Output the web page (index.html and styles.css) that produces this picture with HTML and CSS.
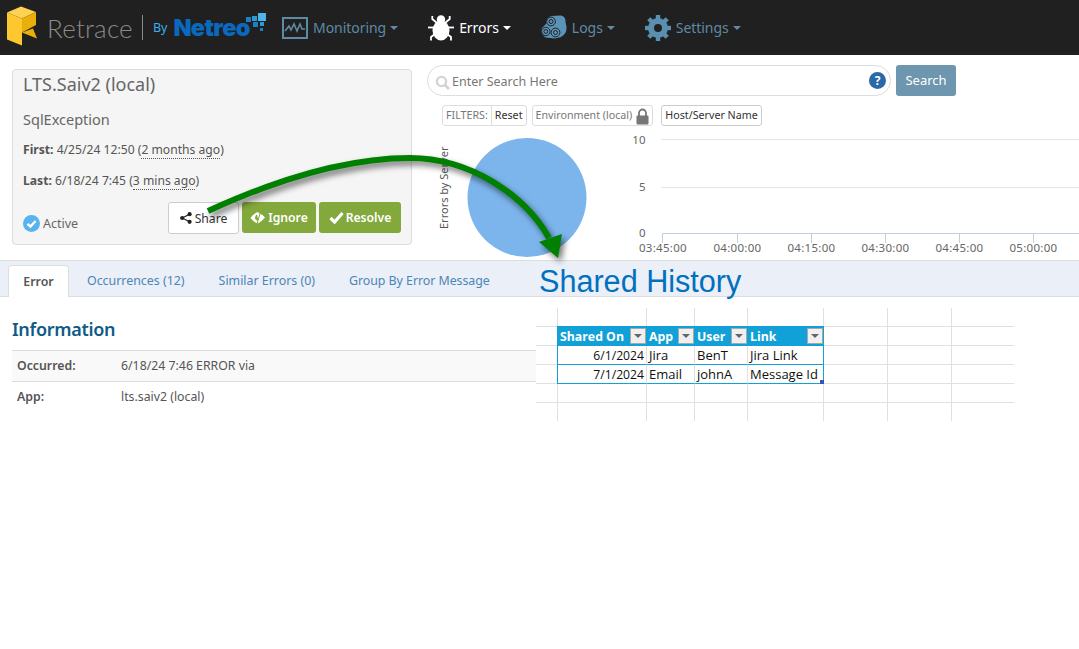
FILE: index.html
```html
<!DOCTYPE html>
<html lang="en">
<head>
<meta charset="utf-8">
<title>Retrace</title>
<link rel="stylesheet" href="styles.css">
</head>
<body>
<header class="topbar">
  <a class="brand">
    <svg class="brand-mark" width="38" height="46" viewBox="0 0 38 46">
      <path d="M7 7.5 L22 13.5 L22 40.5 L7 34.5Z" fill="#fcc72f"/>
      <path d="M7 7.5 L21 1.5 L36 7 L22 13.5Z" fill="#fdd252"/>
      <path d="M22 13.5 L36 7 L36 20 L22 27.5Z" fill="#e8b008"/>
      <path d="M22 27.5 L33 23.5 L37 33.5Z" fill="#e8b008"/>
    </svg>
    <span class="brand-name">Retrace</span>
    <span class="brand-rule"></span>
    <span class="brand-by">By</span>
    <span class="brand-netreo">Netreo</span>
    <svg class="brand-dots" width="24" height="20" viewBox="0 0 24 20">
      <rect x="0" y="4" width="5" height="5" fill="#1d7fc4"/>
      <rect x="6" y="3" width="5" height="5" fill="#2a9ad8"/>
      <rect x="12" y="0" width="8" height="8" fill="#4ab6ea"/>
      <rect x="7" y="9" width="5" height="5" fill="#1d7fc4"/>
      <rect x="14" y="9" width="4" height="4" fill="#2a9ad8"/>
      <rect x="14" y="15" width="3" height="3" fill="#1d7fc4"/>
    </svg>
  </a>
  <nav class="nav">
    <a class="nav-item nav-monitoring">
      <svg width="26" height="22" viewBox="0 0 26 22"><rect x="1" y="1" width="24" height="20" fill="none" stroke="#5f8aa5" stroke-width="2"/><path d="M3 14 L7 9 L9 13 L12 7 L15 14 L18 7 L20 12 L23 12" fill="none" stroke="#5f8aa5" stroke-width="1.6"/></svg>
      <span>Monitoring</span><i class="caret"></i>
    </a>
    <a class="nav-item nav-errors is-active">
      <svg width="26" height="26" viewBox="0 0 26 26"><g stroke="#fff" stroke-width="1.8" fill="none"><path d="M9 8 L4.3 4 L4.3 1"/><path d="M17 8 L21.7 4 L21.7 1"/><path d="M6 12.5 L0 12.5"/><path d="M20 12.5 L26 12.5"/><path d="M7 19 L3 22 L3 25.5"/><path d="M19 19 L23 22 L23 25.5"/></g><ellipse cx="13" cy="15.5" rx="8.5" ry="10" fill="#fff"/><circle cx="13" cy="4.5" r="4.2" fill="#fff"/></svg>
      <span>Errors</span><i class="caret"></i>
    </a>
    <a class="nav-item nav-logs">
      <svg width="26" height="26" viewBox="0 0 26 26">
        <path d="M10 1 L20 0.5 Q25 2 24.5 7 L25.5 12 Q26 19 20 22 L14 23.5 L4.5 22.5 Q-1 18 1 13 L5 9 Q5 3 10 1Z" fill="#5b93b8"/>
        <g fill="#5b93b8" stroke="#202020" stroke-width="1"><circle cx="10" cy="6.5" r="4.4"/><circle cx="4.8" cy="16.5" r="4.2"/><circle cx="14.5" cy="17.5" r="4.4"/></g>
        <g fill="none" stroke="#202020" stroke-width="1"><circle cx="10" cy="6.5" r="2"/><circle cx="4.8" cy="16.5" r="1.9"/><circle cx="14.5" cy="17.5" r="2"/></g>
      </svg>
      <span>Logs</span><i class="caret"></i>
    </a>
    <a class="nav-item nav-settings">
      <svg width="26" height="26" viewBox="0 0 26 26"><circle cx="13" cy="13" r="7" fill="none" stroke="#5b8fb0" stroke-width="6"/><g stroke="#5b8fb0" stroke-width="4.4"><path d="M13 0V5"/><path d="M13 21V26"/><path d="M0 13H5"/><path d="M21 13H26"/><path d="M3.8 3.8L7.3 7.3"/><path d="M18.7 18.7L22.2 22.2"/><path d="M3.8 22.2L7.3 18.7"/><path d="M18.7 7.3L22.2 3.8"/></g></svg>
      <span>Settings</span><i class="caret"></i>
    </a>
  </nav>
</header>

<section class="summary">
  <div class="card">
    <h1 class="card-title">LTS.Saiv2 (local)</h1>
    <h2 class="card-sub">SqlException</h2>
    <p class="card-line"><b>First:</b> 4/25/24 12:50 (<span class="dotted">2 months ago</span>)</p>
    <p class="card-line"><b>Last:</b> 6/18/24 7:45 (<span class="dotted">3 mins ago</span>)</p>
    <div class="card-foot">
      <span class="status">
        <svg width="17" height="17" viewBox="0 0 17 17"><circle cx="8.5" cy="8.5" r="8.5" fill="#58b3ef"/><path d="M4.5 8.8 L7.4 11.6 L12.6 6" fill="none" stroke="#fff" stroke-width="2.4"/></svg>
        Active
      </span>
      <span class="actions">
        <a class="btn btn-share">
          <svg width="12" height="12" viewBox="0 0 12 12"><g fill="#222"><circle cx="2.2" cy="6" r="2.1"/><circle cx="9.6" cy="2.2" r="2.1"/><circle cx="9.6" cy="9.8" r="2.1"/></g><path d="M2.2 6 L9.6 2.2 M2.2 6 L9.6 9.8" stroke="#222" stroke-width="1.2"/></svg>
          Share
        </a>
        <a class="btn btn-green btn-ignore">
          <svg width="16" height="14" viewBox="0 0 16 14"><path d="M0.5 7 Q3 3 7.5 1 L9 2 Q13 3.5 15 6.5 Q12 10 8 12.5 Q3.5 11 0.5 7Z" fill="#fff"/><path d="M7 3.5 Q4.5 5 5.2 8 Q6.5 9.5 8 9.5 L9 7.5 Q7 7 7.5 5.5Z" fill="#83a83c"/><path d="M10.5 1 L7 13" stroke="#83a83c" stroke-width="1"/></svg>
          Ignore
        </a>
        <a class="btn btn-green btn-resolve">
          <svg width="15" height="13" viewBox="0 0 15 13"><path d="M1.5 7 L5.6 11 L13.5 2" fill="none" stroke="#fff" stroke-width="3.2"/></svg>
          Resolve
        </a>
      </span>
    </div>
  </div>

  <div class="side">
    <div class="search-row">
      <div class="search">
        <svg class="search-glass" width="15" height="15" viewBox="0 0 15 15"><circle cx="6.5" cy="6.5" r="4.6" fill="none" stroke="#d4d4d4" stroke-width="2.4"/><path d="M10 10 L14 14" stroke="#d4d4d4" stroke-width="3"/></svg>
        <span class="search-text">Enter Search Here</span>
        <span class="search-help">?</span>
      </div>
      <a class="search-btn">Search</a>
    </div>
    <div class="filters">
      <span class="filter-group"><span class="filter-label">FILTERS:</span><span class="filter-reset">Reset</span></span>
      <span class="filter-chip filter-env">Environment (local)
        <svg width="13" height="17" viewBox="0 0 13 17"><path d="M3 8V5a3.5 3.5 0 0 1 7 0v3" fill="none" stroke="#777" stroke-width="1.8"/><rect x="0.5" y="7.5" width="12" height="9" rx="1" fill="#777"/></svg>
      </span>
      <span class="filter-chip filter-host">Host/Server Name</span>
    </div>
    <svg class="charts" width="652" height="130" viewBox="0 0 652 130">
      <circle cx="100" cy="67.5" r="59.5" fill="#7cb5ec"/>
      <text class="chart-side" transform="translate(21 99) rotate(-90)">Errors by Server</text>
      <g class="chart-grid">
        <path d="M234 9.5H652"/><path d="M234 57.5H652"/>
      </g>
      <g class="chart-axis">
        <path d="M235 103.5H652"/>
        <path d="M235.5 103V113"/><path d="M310.5 103V113"/><path d="M384.5 103V113"/><path d="M458.5 103V113"/><path d="M532.5 103V113"/><path d="M606.5 103V113"/>
      </g>
      <g class="chart-label">
        <text x="219" y="14" text-anchor="end">10</text>
        <text x="219" y="61" text-anchor="end">5</text>
        <text x="219" y="107" text-anchor="end">0</text>
        <text x="236" y="122" text-anchor="middle">03:45:00</text>
        <text x="310.5" y="122" text-anchor="middle">04:00:00</text>
        <text x="384.5" y="122" text-anchor="middle">04:15:00</text>
        <text x="458.5" y="122" text-anchor="middle">04:30:00</text>
        <text x="532.5" y="122" text-anchor="middle">04:45:00</text>
        <text x="606.5" y="122" text-anchor="middle">05:00:00</text>
      </g>
    </svg>
  </div>
</section>

<div class="tabs">
  <a class="tab is-current">Error</a>
  <a class="tab tab-occ">Occurrences (12)</a>
  <a class="tab tab-sim">Similar Errors (0)</a>
  <a class="tab tab-group">Group By Error Message</a>
</div>

<main class="info">
  <h3 class="info-title">Information</h3>
  <div class="info-row is-striped"><b>Occurred:</b><span>6/18/24 7:46 ERROR via</span></div>
  <div class="info-row"><b>App:</b><span>lts.saiv2 (local)</span></div>
</main>

<div class="shared-title">Shared History</div>

<div class="sheet">
  <div class="c"></div><div class="c"></div><div class="c"></div><div class="c"></div><div class="c"></div><div class="c"></div><div class="c"></div><div class="c last"></div>
  <div class="c"></div>
  <div class="c th first">Shared On<i class="fbtn"></i></div><div class="c th">App<i class="fbtn"></i></div><div class="c th">User<i class="fbtn"></i></div><div class="c th">Link<i class="fbtn"></i></div>
  <div class="c"></div><div class="c"></div><div class="c last"></div>
  <div class="c"></div>
  <div class="c td num first">6/1/2024</div><div class="c td">Jira</div><div class="c td">BenT</div><div class="c td end">Jira Link</div>
  <div class="c"></div><div class="c"></div><div class="c last"></div>
  <div class="c"></div>
  <div class="c td num first">7/1/2024</div><div class="c td">Email</div><div class="c td">johnA</div><div class="c td end corner">Message Id</div>
  <div class="c"></div><div class="c"></div><div class="c last"></div>
  <div class="c"></div><div class="c"></div><div class="c"></div><div class="c"></div><div class="c"></div><div class="c"></div><div class="c"></div><div class="c last"></div>
  <div class="c nob"></div><div class="c nob"></div><div class="c nob"></div><div class="c nob"></div><div class="c nob"></div><div class="c nob"></div><div class="c nob"></div><div class="c nob last"></div>
</div>

<svg class="arrow" width="1079" height="649" viewBox="0 0 1079 649">
  <path d="M208 211 C 280 178, 350 158, 410 158 C 470 158, 525 195, 549 238" fill="none" stroke="#008000" stroke-width="6"/>
  <path d="M539 242 L562 234 L558 258Z" fill="#008000"/>
</svg>
</body>
</html>
```
FILE: styles.css
```css
* { box-sizing: border-box; }
html, body { margin: 0; height: 649px; overflow: hidden; background: #fff; }
body { font-family: "Noto Sans", "Open Sans", sans-serif; font-size: 13px; color: #555; position: relative; }
a { text-decoration: none; }

.topbar { height: 55px; background: #202020; display: flex; align-items: center; }
.brand { display: flex; align-items: center; width: 282px; height: 55px; flex: none; }
.brand-mark { flex: none; }
.brand-name { font-family: "Lato", sans-serif; font-weight: 300; font-size: 26px; color: #8a8a8a; margin-left: 9px; letter-spacing: 0.2px; }
.brand-rule { width: 1px; height: 25px; background: #8a8a8a; margin-left: 9px; }
.brand-by { font-size: 12.5px; color: #3eaee8; margin-left: 10px; }
.brand-netreo { font-family: "Inter", sans-serif; font-weight: 900; font-size: 23.5px; color: #0a68bd; margin-left: 6px; letter-spacing: -0.6px; }
.brand-dots { margin: -10px 0 0 -4px; flex: none; }

.nav { display: flex; align-items: center; height: 55px; }
.nav-item { display: flex; align-items: center; font-size: 14px; color: #5f8aa5; letter-spacing: -0.05px; }
.nav-item svg { flex: none; margin-right: 5px; }
.nav-errors { margin-left: 30px; color: #fff; }
.nav-logs { margin-left: 30px; }
.nav-settings { margin-left: 30px; }
.caret { width: 0; height: 0; border-left: 4px solid transparent; border-right: 4px solid transparent; border-top: 4px solid currentColor; margin-left: 4px; }

.summary { display: flex; align-items: flex-start; height: 205px; }
.card { width: 400px; height: 176px; margin: 14px 0 0 12px; padding: 0 10px; background: #f5f5f5; border: 1px solid #ddd; border-radius: 4px; flex: none; }
.card-title { margin: 3px 0 0; font-size: 18px; font-weight: 400; color: #666; line-height: 22px; }
.card-sub { margin: 14px 0 0; font-size: 14.5px; font-weight: 400; color: #666; line-height: 20px; }
.card-line { margin: 11px 0 0; font-size: 12.15px; line-height: 20px; color: #555; }
.card-line + .card-line { margin-top: 11px; }
.dotted { border-bottom: 1px dotted #555; }
.card-foot { display: flex; justify-content: space-between; align-items: center; margin-top: 11px; height: 32px; }
.status { display: flex; align-items: center; gap: 3px; font-size: 12.5px; color: #666; margin-top: 11px; }
.actions { display: flex; gap: 3px; }
.btn { display: flex; align-items: center; justify-content: center; height: 31px; border-radius: 3px; font-size: 12.2px; }
.btn-share { width: 71px; height: 32px; background: #fff; border: 1px solid #ccc; color: #333; gap: 3px; }
.btn-green { background: #83a83c; color: #fff; font-weight: 600; gap: 2px; }
.btn-ignore { width: 74px; }
.btn-resolve { width: 82px; }

.side { margin-left: 15px; flex: 1; min-width: 0; padding-top: 10px; }
.search-row { display: flex; gap: 5px; }
.search { width: 464px; height: 31px; border: 1px solid #ddd; border-radius: 16px; display: flex; align-items: center; padding: 0 4px 0 7px; background: #fff; }
.search-glass { flex: none; margin-top: 3px; }
.search-text { font-size: 12.5px; color: #777; margin: 1px 0 0 2px; flex: 1; }
.search-help { width: 17px; height: 17px; border-radius: 50%; background: #2a68a8; color: #fff; font-weight: 700; font-size: 12px; line-height: 17px; text-align: center; }
.search-btn { width: 60px; height: 31px; border-radius: 3px; background: #6e96ae; color: #fff; font-size: 13px; line-height: 31px; text-align: center; }
.filters { display: flex; gap: 5px; margin: 9px 0 0 15px; height: 21px; font-size: 10.7px; }
.filter-group { display: flex; border: 1px solid #ddd; border-radius: 3px; }
.filter-label { padding: 0 3px 0 3px; color: #777; line-height: 18px; }
.filter-reset { border-left: 1px solid #ddd; padding: 0 3px; color: #333; line-height: 18px; }
.filter-chip { display: flex; align-items: center; border: 1px solid #ddd; border-radius: 3px; padding: 0 3px 1px; white-space: nowrap; }
.filter-env { color: #777; gap: 4px; }
.filter-env svg { margin-top: 3px; }
.filter-host { color: #333; border-color: #ccc; margin-left: 3px; }
.charts { display: block; margin-top: 4px; }
.chart-side { font-size: 11px; fill: #555; }
.chart-grid path { stroke: #e6e6e6; fill: none; }
.chart-axis path { stroke: #c0d0e0; fill: none; }
.chart-label text { font-size: 11.5px; fill: #666; letter-spacing: .3px; }

.tabs { height: 37px; background: #ebeff7; border-top: 1px solid #ddd; border-bottom: 1px solid #ddd; display: flex; align-items: flex-end; padding-left: 8px; font-size: 12.4px; }
.tab { height: 32px; line-height: 32px; color: #4a86b8; margin-bottom: -1px; }
.tab.is-current { width: 61px; text-align: center; background: #fff; border: 1px solid #ddd; border-bottom: 0; border-radius: 4px 4px 0 0; color: #555; font-weight: 600; }
.tab-occ { margin-left: 18px; }
.tab-sim { margin-left: 34px; }
.tab-group { margin-left: 34px; letter-spacing: -0.05px; }

.info { width: 524px; margin-left: 12px; padding-top: 20px; }
.info-title { margin: 0 0 8px; font-size: 18px; line-height: 25px; font-weight: 600; color: #0f5b85; letter-spacing: -0.3px; }
.info-row { display: flex; height: 31px; align-items: center; border-top: 1px solid #ddd; font-size: 12.3px; padding: 0 0 2px 5px; color: #555; }
.info-row b { width: 104px; font-weight: 600; }
.is-striped { background: #f9f9f9; }

.shared-title { position: absolute; left: 539px; top: 263px; font-family: "Liberation Sans", Arial, sans-serif; font-size: 30.6px; line-height: 36px; color: #0070c0; }

.sheet { position: absolute; left: 536px; top: 308px; display: grid; grid-template-columns: 22px 89px 48px 53px 76px 64px 64px 62px; grid-template-rows: 19px repeat(4, 19px) 18px; background: #fff; font-family: "Open Sans", sans-serif; font-size: 13px; color: #111; }
.c { border-right: 1px solid #e0e0e0; border-bottom: 1px solid #e0e0e0; padding: 0 2px; line-height: 19px; white-space: nowrap; position: relative; }
.c.last { border-right: 0; }
.c.nob { border-bottom: 0; }
.th { background: #12a0d8; color: #fff; font-weight: 700; font-size: 12.3px; line-height: 19px; border-right-color: #12a0d8; border-bottom-color: #12a0d8; box-shadow: 0 -1px 0 #12a0d8; }
.th.first { box-shadow: 0 -1px 0 #12a0d8, -1px 0 0 #12a0d8, -1px -1px 0 #12a0d8; }
.fbtn { position: absolute; right: 0; top: 1px; width: 16px; height: 16px; background: #f0f0f3; border: 1px solid #a8a8a8; }
.fbtn::after { content: ""; position: absolute; left: 3px; top: 5px; border-left: 4px solid transparent; border-right: 4px solid transparent; border-top: 4px solid #666; }
.td { border-bottom-color: #12a0d8; }
.td.first { box-shadow: -1px 0 0 #12a0d8; }
.td.end { border-right-color: #12a0d8; }
.num { text-align: right; font-size: 12.2px; }
.corner::after { content: ""; position: absolute; right: -1px; bottom: -1px; width: 4px; height: 4px; background: #3f51b5; }

.arrow { position: absolute; left: 0; top: 0; pointer-events: none; filter: drop-shadow(3px 4px 3px rgba(0,0,0,.55)); }
```
